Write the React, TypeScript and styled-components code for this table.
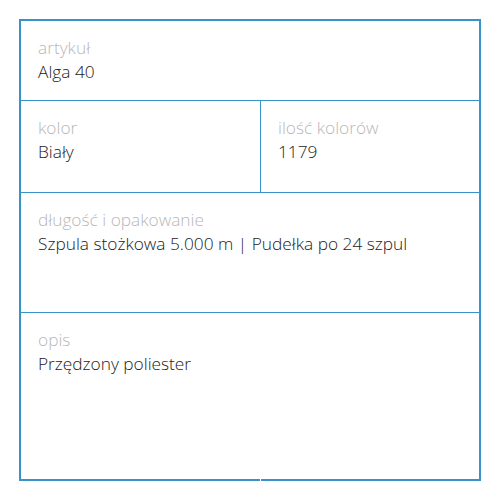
import React from "react";
import styled, { createGlobalStyle } from "styled-components";

const blue = "#3894c8";

const Global = createGlobalStyle`
    *, *::before, *::after {
        box-sizing: border-box;
    }
    body {
        margin: 0;
        background: #fff;
        font-family: "Open Sans", "Liberation Sans", sans-serif;
    }
`;

const Page = styled.div`
    padding: 19px;
    width: 500px;
`;

const Frame = styled.div`
    border: 2px solid ${blue};
    border-bottom: none;
    display: flex;
    flex-direction: column;
`;

const Row = styled.div<{ h: number; last?: boolean }>`
    display: flex;
    height: ${(p) => p.h}px;
    border-bottom: ${(p) => (p.last ? "none" : `1px solid ${blue}`)};
`;

const Cell = styled.div<{ w?: number; divider?: boolean }>`
    flex: ${(p) => (p.w ? `0 0 ${p.w}px` : "1")};
    padding: 15px 17px;
    border-right: ${(p) => (p.divider ? `1px solid ${blue}` : "none")};
`;

const Label = styled.div`
    font-size: 17.3px;
    line-height: 24px;
    font-weight: 300;
    color: #b8b8b8;
`;

const Value = styled.div`
    font-size: 17.3px;
    line-height: 24px;
    font-weight: 300;
    color: #222;
`;

const Bottom = styled.div`
    display: flex;
    gap: 1px;
`;

const Edge = styled.div<{ w?: number }>`
    flex: ${(p) => (p.w ? `0 0 ${p.w}px` : "1")};
    height: 2px;
    background: ${blue};
`;

const Field = ({ label, value }: { label: string; value: string }) => (
    <>
        <Label>{label}</Label>
        <Value>{value}</Value>
    </>
);

const App = () => {
    return (
        <Page>
            <Global />
            <Frame>
                <Row h={80}>
                    <Cell>
                        <Field label="artykuł" value="Alga 40" />
                    </Cell>
                </Row>
                <Row h={92}>
                    <Cell w={240} divider>
                        <Field label="kolor" value="Biały" />
                    </Cell>
                    <Cell>
                        <Field label="ilość kolorów" value="1179" />
                    </Cell>
                </Row>
                <Row h={120}>
                    <Cell>
                        <Field label="długość i opakowanie" value="Szpula stożkowa 5.000 m | Pudełka po 24 szpul" />
                    </Cell>
                </Row>
                <Row h={166} last>
                    <Cell>
                        <Field label="opis" value="Przędzony poliester" />
                    </Cell>
                </Row>
            </Frame>
            <Bottom>
                <Edge w={241} />
                <Edge />
            </Bottom>
        </Page>
    );
};

export default App;
